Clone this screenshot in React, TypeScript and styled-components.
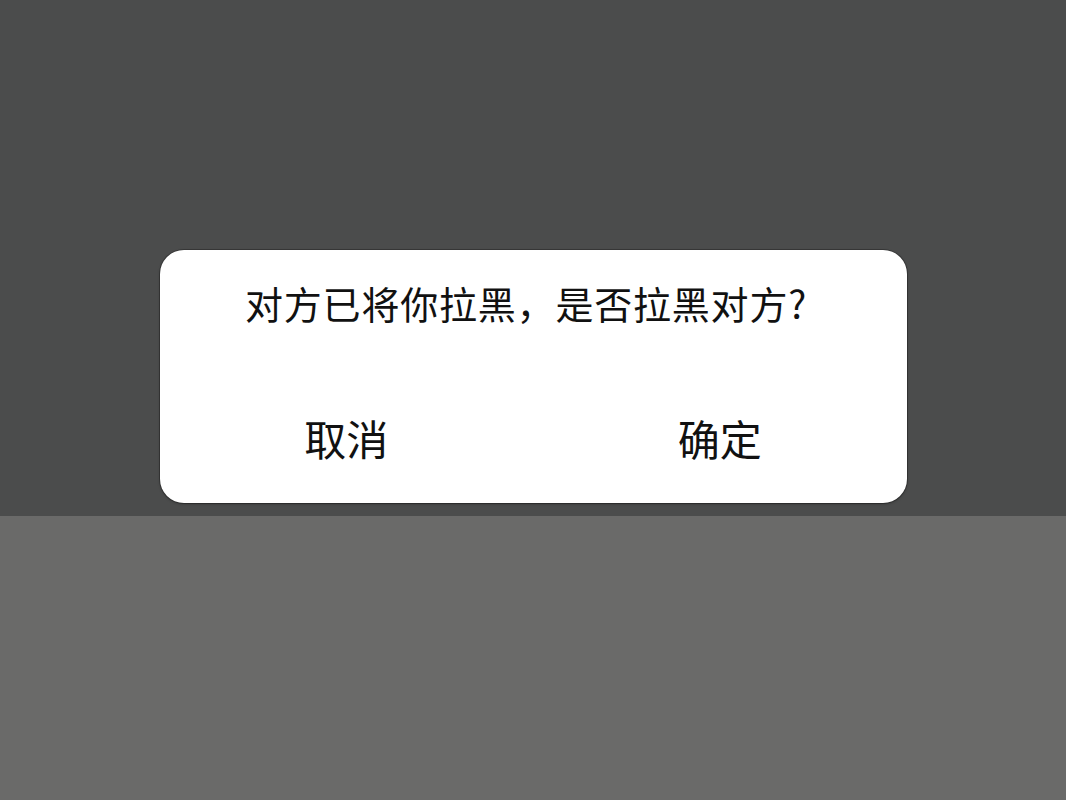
import React from "react";
import styled, { createGlobalStyle } from "styled-components";

const GlobalStyle = createGlobalStyle`
  html, body {
    margin: 0;
    padding: 0;
    background: #6a6a69;
  }
  body {
    font-family: "Noto Sans CJK SC", "Noto Sans", sans-serif;
  }
`;

const App = () => {
  return (
    <>
      <GlobalStyle />
      <Page>
        <Overlay>
          <Dialog>
            <Title>对方已将你拉黑，是否拉黑对方?</Title>
            <Actions>
              <ActionButton>取消</ActionButton>
              <ActionButton>确定</ActionButton>
            </Actions>
          </Dialog>
        </Overlay>
        <Lower />
      </Page>
    </>
  );
};

export default App;

const Page = styled.div`
  width: 1066px;
  height: 800px;
  display: flex;
  flex-direction: column;
  overflow: hidden;
`;

const Overlay = styled.div`
  height: 516px;
  background-color: #4b4c4c;
  display: flex;
  justify-content: center;
  align-items: flex-end;
  padding-bottom: 13px;
  box-sizing: border-box;
`;

const Lower = styled.div`
  flex: 1;
  background-color: #6a6a69;
`;

const Dialog = styled.div`
  width: 747px;
  height: 253px;
  background-color: #ffffff;
  border-radius: 24px;
  box-shadow: 0 0 0 1px rgba(0, 0, 0, 0.25), 0 1px 3px rgba(0, 0, 0, 0.3);
  display: flex;
  flex-direction: column;
  box-sizing: border-box;
  padding-top: 26px;
`;

const Title = styled.div`
  font-size: 38px;
  line-height: 54px;
  letter-spacing: 0.8px;
  color: #111;
  text-align: center;
  padding-right: 14px;
`;

const Actions = styled.div`
  flex: 1;
  display: grid;
  grid-template-columns: 1fr 1fr;
  align-items: end;
  padding-bottom: 35px;
`;

const ActionButton = styled.div`
  font-size: 42px;
  line-height: 60px;
  color: #111;
  text-align: center;
`;
